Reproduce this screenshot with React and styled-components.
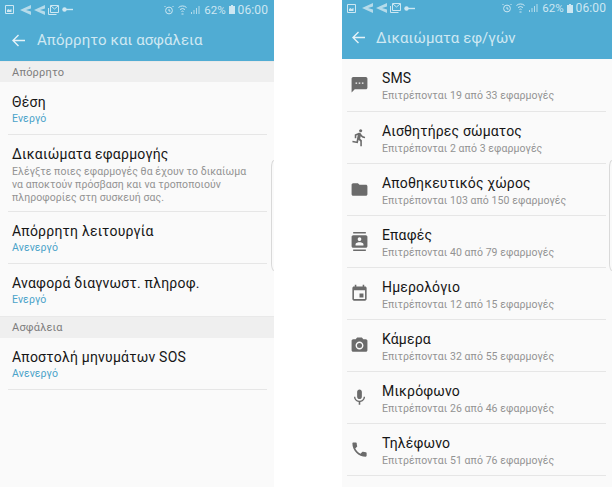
import React from 'react';
import styled, { createGlobalStyle } from 'styled-components';

const Global = createGlobalStyle`
  html, body { margin: 0; padding: 0; background: #fff; }
  body { width: 612px; height: 487px; overflow: hidden; font-family: Roboto, "Noto Sans", sans-serif; }
`;

const Page = styled.div`
  display: flex;
  justify-content: space-between;
  width: 612px;
  height: 487px;
  overflow: hidden;
`;

const Phone = styled.div`
  position: relative;
  width: ${(p) => p.$width}px;
  height: 487px;
  background: #fafafa;
  display: flex;
  flex-direction: column;
  overflow: hidden;
`;

const Header = styled.div`
  height: ${(p) => p.$height}px;
  background: #50acd3;
  flex: none;
  display: flex;
  flex-direction: column;
`;

const StatusBar = styled.div`
  height: ${(p) => p.$height}px;
  padding: 0 6px 0 5px;
  display: flex;
  align-items: center;
  justify-content: space-between;
  color: #cde7f2;
  font-size: 11.5px;
`;

const StatusGroup = styled.div`
  display: flex;
  align-items: center;
  gap: ${(p) => p.$gap || 3}px;
`;

const Clock = styled.span`
  font-size: 12px;
  letter-spacing: 0.1px;
`;

const Percent = styled.span`
  margin-left: 1px;
`;

const TitleBar = styled.div`
  flex: 1;
  display: flex;
  align-items: center;
  padding-left: ${(p) => p.$left}px;
  gap: ${(p) => p.$gap}px;
  color: #cfe8f2;
  font-size: 15px;
  letter-spacing: 0.08px;
`;

const SectionLabel = styled.div`
  height: ${(p) => p.$height}px;
  background: #efefef;
  border-top: 1px solid #e9e9e9;
  box-sizing: border-box;
  padding-left: 12px;
  display: flex;
  align-items: center;
  color: #7d7d7d;
  font-size: 11px;
  letter-spacing: 0.2px;
  flex: none;
`;

const SettingRow = styled.div`
  margin-left: 8px;
  width: 259px;
  padding: ${(p) => p.$top || 10}px 0 0 4px;
  box-sizing: border-box;
  height: ${(p) => p.$height || 52}px;
  border-bottom: ${(p) => (p.$plain ? 'none' : '1px solid #e6e6e6')};
  flex: none;
`;

const SettingTitle = styled.div`
  color: #161616;
  font-size: 14px;
  line-height: 18px;
  letter-spacing: 0.22px;
`;

const StateText = styled.div`
  color: #4ba3c9;
  font-size: 10.5px;
  line-height: 14px;
  margin-top: 1px;
  letter-spacing: 0.1px;
`;

const Description = styled.div`
  color: #939393;
  font-size: 10.5px;
  line-height: 13px;
  margin-top: 2px;
  letter-spacing: 0.06px;
`;

const AppRow = styled.div`
  margin-left: 5px;
  width: 259px;
  height: ${(p) => (p.$first ? 53 : 52)}px;
  box-sizing: border-box;
  border-bottom: 1px solid #e6e6e6;
  display: flex;
  flex: none;
`;

const AppText = styled.div`
  padding-top: 10px;
`;

const IconSlot = styled.div`
  width: 35px;
  flex: none;
  display: flex;
  align-items: center;
  justify-content: center;
  padding: 0 10px 1px 0;
  box-sizing: border-box;
  color: #6b6b6b;
`;

const AppTitle = styled.div`
  color: #161616;
  font-size: 14px;
  line-height: 18px;
  letter-spacing: 0.16px;
`;

const AppCount = styled.div`
  color: #939393;
  font-size: 10.5px;
  line-height: 13px;
  margin-top: 2px;
  letter-spacing: 0.07px;
`;

const EdgeHandle = styled.div`
  position: absolute;
  right: 0;
  top: 160px;
  width: 3px;
  height: 111px;
  box-sizing: border-box;
  border: 1px solid #d9d9d9;
  border-right: none;
  border-radius: 4px 0 0 4px / 10px 0 0 10px;
`;

const Svg = ({ children }) => (
  <svg width="19" height="19" viewBox="0 0 24 24" fill="currentColor" style={{ flex: 'none' }}>{children}</svg>
);

const BackArrow = () => (
  <svg width="13" height="13" viewBox="0 0 13 13" fill="none" stroke="#e4f2f8" strokeWidth="1.4" style={{ flex: 'none' }}>
    <path d="M13 6.5H1M6.5 1L1 6.5L6.5 12" />
  </svg>
);

function StatusIcons() {
  return (
    <StatusGroup>
      <svg width="9" height="9" viewBox="0 0 9 9"><path fill="none" stroke="#cde7f2" d="M.5.5h8v8h-8z" /><path fill="#cde7f2" d="M2 5l1.5-1 1 1 2-1v3H2z" /></svg>
      <svg width="11" height="10" viewBox="0 0 11 10" style={{ marginLeft: 3 }}><path fill="#b6dbea" d="M0 5L11 0v3.500L6 5l5 1.500V10z" /></svg>
      <svg width="11" height="10" viewBox="0 0 11 10"><path fill="#b6dbea" d="M0 5L11 0v3.500L6 5l5 1.500V10z" /></svg>
      <svg width="11" height="10" viewBox="0 0 11 10"><path fill="none" stroke="#cde7f2" d="M2.500.5h8v7h-8zM.5 3v6.500h8M3 1l3.500 3L10 1" /></svg>
      <svg width="11" height="5" viewBox="0 0 11 5"><circle cx="2.500" cy="2.500" r="2.200" fill="#cde7f2" /><path stroke="#cde7f2" strokeWidth="1.400" d="M4 2.500h7" /></svg>
    </StatusGroup>
  );
}

function StatusRight() {
  return (
    <StatusGroup $gap={3}>
      <svg width="10" height="10" viewBox="0 0 10 10" fill="none" stroke="#cde7f2"><circle cx="5" cy="5.500" r="3.400" /><path d="M1.500 1L.5 2M8.500 1l1 1M5 4v2h1.500" /></svg>
      <svg width="9" height="10" viewBox="0 0 9 10" fill="none" stroke="#cde7f2" style={{ marginLeft: 1 }}><path d="M.5 2.500a6 6 0 018 0M2 4.500a4 4 0 015 0M3.500 6.500a1.500 1.500 0 012 0M3.500 9h2" /></svg>
      <svg width="10" height="8" viewBox="0 0 10 8" fill="#cde7f2"><path d="M1 6h1v2H1zM3.500 4h1v4h-1zM6 2h1v6H6zM8.500 0h1v8h-1z" opacity=".8" /></svg>
      <Percent>62%</Percent>
      <svg width="6" height="9" viewBox="0 0 6 9" fill="#cde7f2"><path d="M2 0h2v1h2v8H0V1h2z" /></svg>
      <Clock>06:00</Clock>
    </StatusGroup>
  );
}

const apps = [
  ['SMS', 'Επιτρέπονται 19 από 33 εφαρμογές', <Svg key="a"><path d="M20 2.500H4c-1 0-2 .9-2 2V22l4-4h14c1.100 0 2-.9 2-2V4.500c0-1.100-.9-2-2-2zM9 11.200H7V9.500h2zm4 0h-2V9.500h2zm4 0h-2V9.500h2z" /></Svg>],
  ['Αισθητήρες σώματος', 'Επιτρέπονται 2 από 3 εφαρμογές', <Svg key="b"><path d="M13.490 5.480c1.100 0 2-.9 2-2s-.9-2-2-2-2 .9-2 2 .9 2 2 2zm-3.600 13.900l1-4.400 2.100 2v6h2v-7.500l-2.100-2 .6-3c1.300 1.500 3.300 2.500 5.500 2.500v-2c-1.900 0-3.500-1-4.300-2.400l-1-1.600c-.4-.6-1-1-1.700-1-.3 0-.5.1-.8.1l-5.200 2.200v4.700h2v-3.400l1.800-.7-1.600 8.100-4.900-1-.4 2 7 1.400z" /></Svg>],
  ['Αποθηκευτικός χώρος', 'Επιτρέπονται 103 από 150 εφαρμογές', <Svg key="c"><path d="M10 4H4c-1.100 0-2 .9-2 2v12c0 1.100.9 2 2 2h16c1.100 0 2-.9 2-2V8c0-1.100-.9-2-2-2h-8l-2-2z" /></Svg>],
  ['Επαφές', 'Επιτρέπονται 40 από 79 εφαρμογές', <Svg key="d"><path d="M20 0H4v2h16V0zM4 24h16v-2H4v2zM20 4H4c-1.100 0-2 .9-2 2v12c0 1.100.9 2 2 2h16c1.100 0 2-.9 2-2V6c0-1.100-.9-2-2-2zm-8 2.750c1.240 0 2.250 1.010 2.250 2.250s-1.010 2.250-2.250 2.250S9.750 10.240 9.750 9 10.760 6.750 12 6.750zM17 17H7v-1.500c0-1.670 3.330-2.500 5-2.500s5 .83 5 2.500V17z" /></Svg>],
  ['Ημερολόγιο', 'Επιτρέπονται 12 από 15 εφαρμογές', <Svg key="e"><path d="M17 12h-5v5h5v-5zM16 1v2H8V1H6v2H5c-1.110 0-1.990.9-1.990 2L3 19c0 1.100.89 2 2 2h14c1.100 0 2-.9 2-2V5c0-1.100-.9-2-2-2h-1V1h-2zm3 18H5V8h14v11z" /></Svg>],
  ['Κάμερα', 'Επιτρέπονται 32 από 55 εφαρμογές', <Svg key="f"><circle cx="12" cy="12" r="3.200" /><path d="M9 2L7.170 4H4c-1.100 0-2 .9-2 2v12c0 1.100.9 2 2 2h16c1.100 0 2-.9 2-2V6c0-1.100-.9-2-2-2h-3.170L15 2H9zm3 15c-2.760 0-5-2.240-5-5s2.240-5 5-5 5 2.240 5 5-2.240 5-5 5z" /></Svg>],
  ['Μικρόφωνο', 'Επιτρέπονται 26 από 46 εφαρμογές', <Svg key="g"><path d="M12 14c1.660 0 2.990-1.340 2.990-3L15 5c0-1.660-1.340-3-3-3S9 3.340 9 5v6c0 1.660 1.340 3 3 3zm5.300-3c0 3-2.540 5.100-5.300 5.100S6.700 14 6.700 11H5c0 3.410 2.720 6.230 6 6.720V21h2v-3.280c3.280-.48 6-3.300 6-6.720h-1.700z" /></Svg>],
  ['Τηλέφωνο', 'Επιτρέπονται 51 από 76 εφαρμογές', <Svg key="h"><path d="M6.620 10.790c1.440 2.830 3.760 5.140 6.590 6.590l2.200-2.200c.27-.27.67-.36 1.020-.24 1.120.37 2.330.57 3.570.57.550 0 1 .45 1 1V20c0 .55-.45 1-1 1-9.390 0-17-7.610-17-17 0-.55.450-1 1-1h3.500c.55 0 1 .45 1 1 0 1.250.2 2.450.57 3.570.11.350.03.740-.25 1.020l-2.200 2.200z" /></Svg>],
];

export default function App() {
  return (
    <Page>
      <Global />
      <Phone $width={274}>
        <Header $height={61}>
          <StatusBar $height={19}><StatusIcons /><StatusRight /></StatusBar>
          <TitleBar $left={12} $gap={12}>
            <BackArrow />
            <span>Απόρρητο και ασφάλεια</span>
          </TitleBar>
        </Header>
        <SectionLabel $height={21}>Απόρρητο</SectionLabel>
        <SettingRow $top={11} $height={53}>
          <SettingTitle>Θέση</SettingTitle>
          <StateText>Ενεργό</StateText>
        </SettingRow>
        <SettingRow $height={77}>
          <SettingTitle>Δικαιώματα εφαρμογής</SettingTitle>
          <Description>
            Ελέγξτε ποιες εφαρμογές θα έχουν το δικαίωμα<br />
            να αποκτούν πρόσβαση και να τροποποιούν<br />
            πληροφορίες στη συσκευή σας.
          </Description>
        </SettingRow>
        <SettingRow>
          <SettingTitle>Απόρρητη λειτουργία</SettingTitle>
          <StateText>Ανενεργό</StateText>
        </SettingRow>
        <SettingRow $plain>
          <SettingTitle>Αναφορά διαγνωστ. πληροφ.</SettingTitle>
          <StateText>Ενεργό</StateText>
        </SettingRow>
        <SectionLabel $height={22}>Ασφάλεια</SectionLabel>
        <SettingRow>
          <SettingTitle>Αποστολή μηνυμάτων SOS</SettingTitle>
          <StateText>Ανενεργό</StateText>
        </SettingRow>
        <EdgeHandle />
      </Phone>
      <Phone $width={270}>
        <Header $height={59}>
          <StatusBar $height={16}><StatusIcons /><StatusRight /></StatusBar>
          <TitleBar $left={10} $gap={11}>
            <BackArrow />
            <span>Δικαιώματα εφ/γών</span>
          </TitleBar>
        </Header>
        {apps.map(([title, count, icon], i) => (
          <AppRow key={title} $first={i === 0}>
            <IconSlot>{icon}</IconSlot>
            <AppText>
              <AppTitle>{title}</AppTitle>
              <AppCount>{count}</AppCount>
            </AppText>
          </AppRow>
        ))}
        <EdgeHandle />
      </Phone>
    </Page>
  );
}
